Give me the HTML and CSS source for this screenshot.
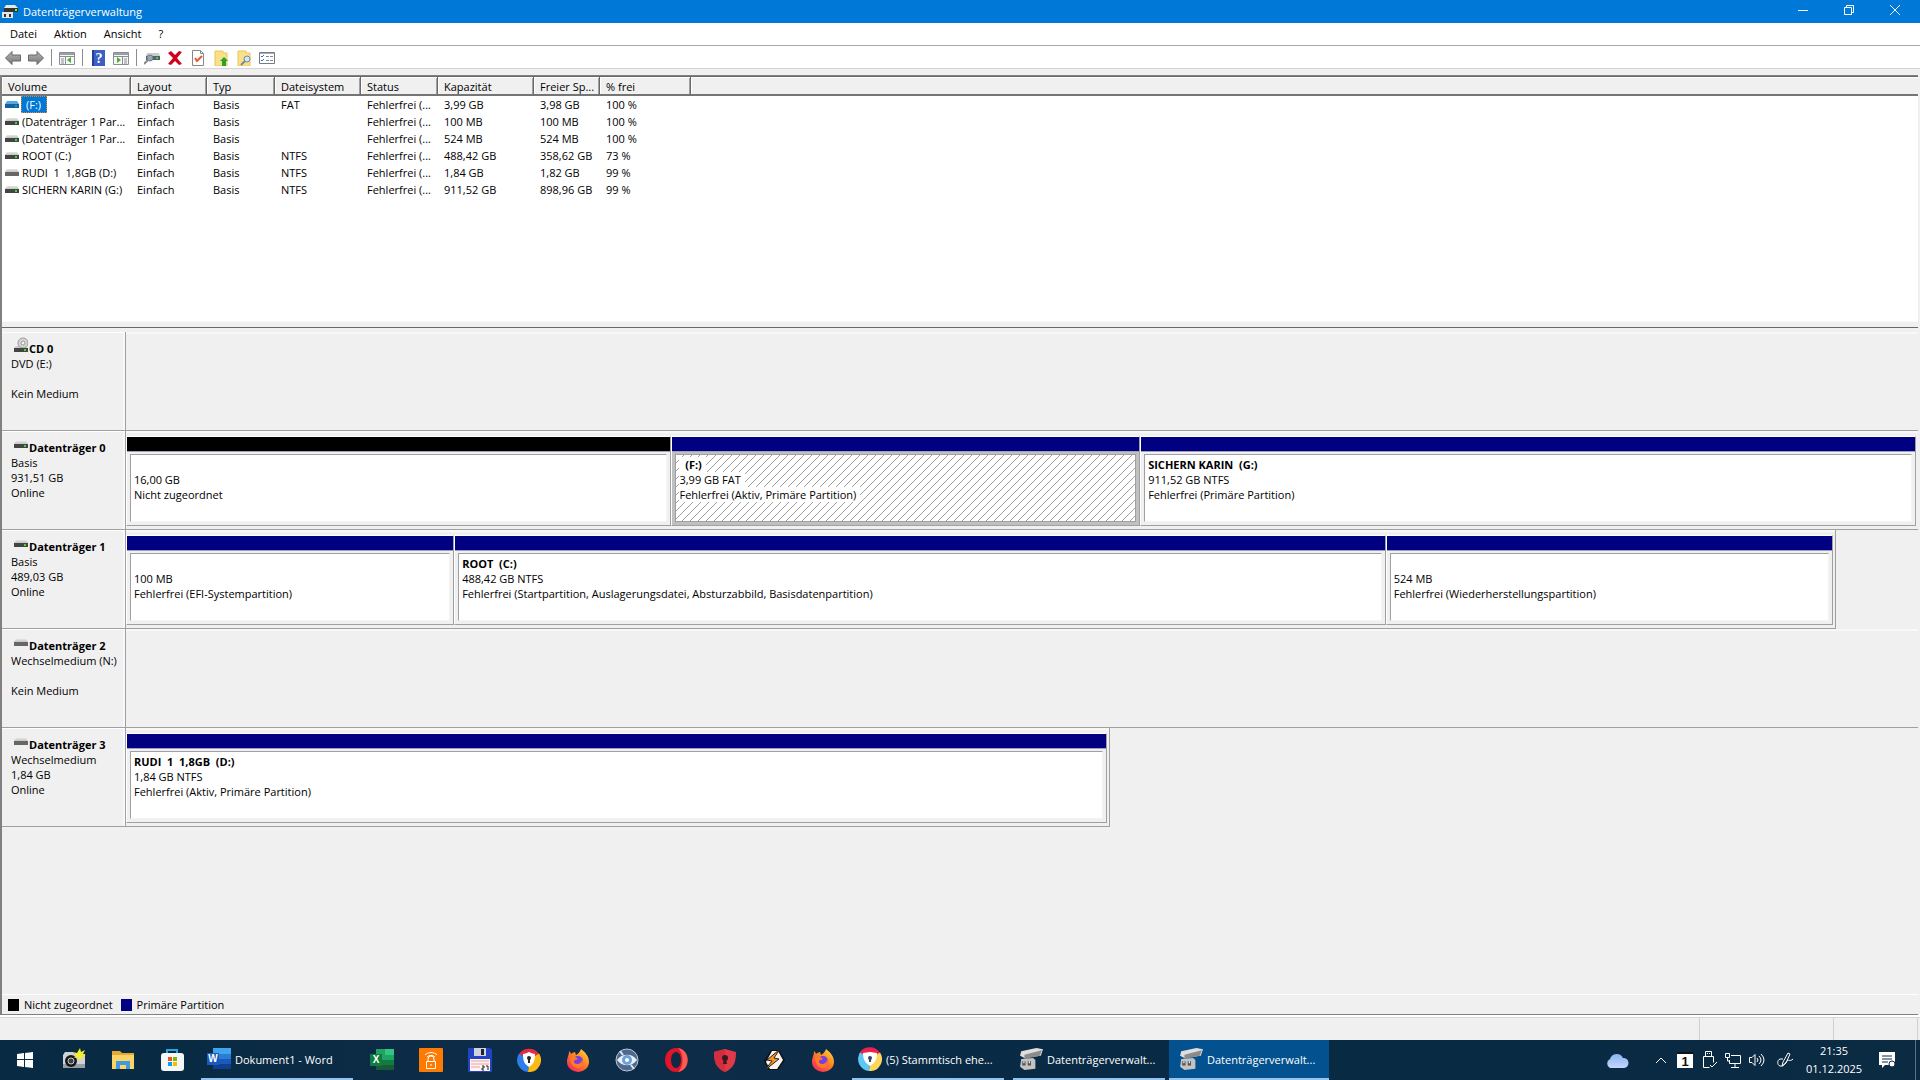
FILE: index.html
```
<!DOCTYPE html>
<html lang="de">
<head>
<meta charset="utf-8">
<title>Datenträgerverwaltung</title>
<link rel="stylesheet" href="styles.css">
</head>
<body>
<svg class="defs" aria-hidden="true">
  <defs>
    <linearGradient id="gTop" x1="0" y1="0" x2="0" y2="1"><stop offset="0" stop-color="#e4e4e4"/><stop offset="1" stop-color="#c4c4c4"/></linearGradient>
    <linearGradient id="gArrow" x1="0" y1="0" x2="0" y2="1"><stop offset="0" stop-color="#b5b5b5"/><stop offset="1" stop-color="#777"/></linearGradient>
    <linearGradient id="gFire" x1="1" y1="0" x2="0.2" y2="1"><stop offset="0" stop-color="#ffe14a"/><stop offset=".45" stop-color="#ff8a1e"/><stop offset="1" stop-color="#f5255e"/></linearGradient>
    <linearGradient id="gCloud" x1="0" y1="0" x2="0" y2="1"><stop offset="0" stop-color="#8ab2f2"/><stop offset="1" stop-color="#c4d6fb"/></linearGradient>
    <symbol id="drive" viewBox="0 0 14 7"><path d="M2 0h10l2 3H0z" fill="url(#gTop)"/><path d="M0 3h14v4H0z" fill="#444"/><path d="M10 4h2v2h-2z" fill="#2fe02f"/></symbol>
    <symbol id="drive-off" viewBox="0 0 14 7"><path d="M2 0h10l2 3H0z" fill="url(#gTop)"/><path d="M0 3h14v4H0z" fill="#666"/></symbol>
    <symbol id="drive-sel" viewBox="0 0 14 7"><path d="M2 0h10l2 3H0z" fill="#5aa6e4"/><path d="M0 3h14v4H0z" fill="#11629f"/><path d="M10 4h2v2h-2z" fill="#1aa0a0"/></symbol>
    <symbol id="cd" viewBox="0 0 14 16"><path d="M2 9h9l3 2H0z" fill="#ccc"/><circle cx="9" cy="6" r="5" fill="#d6d6d6" stroke="#999"/><circle cx="9" cy="6" r="2" fill="#f4f4f4" stroke="#999"/><path d="M0 11h14v4H0z" fill="#444"/><path d="M10 12h2v2h-2z" fill="#2fe02f"/></symbol>
    <symbol id="firefox" viewBox="0 0 24 24"><path d="M15 1c4 3 8 7 8 13a11 10 0 0 1-22 0C1 9 3 8 3 3c1 1 2 2 2 3 1-1 3-2 4-2l1 3c2-1 4-3 5-6z" fill="url(#gFire)"/><circle cx="12" cy="13" r="5" fill="#7b3fe0"/><path d="M4 9c3-1 5 0 7 1 1 1 0 2-2 2-2 1-1 4 2 4s5-2 5-5c2 4 0 9-4 9-5 0-8-5-8-11z" fill="#ff7b28"/></symbol>
    <symbol id="avg" viewBox="0 0 24 24"><path d="M12 12L2 6a12 12 0 0 1 20 0z" fill="#e32b45"/><path d="M12 12l10-6.500A12 12 0 0 1 11 24z" fill="#fbb914"/><path d="M12 12l-1 12A12 12 0 0 1 2 5.500z" fill="#2f7de8"/><path d="M12 4c2 1 5 2 6 2 0 6-1 10-6 13-5-3-6-7-6-13 1 0 4-1 6-2z" fill="#fff"/><circle cx="12" cy="10" r="2" fill="#222"/><path d="M11 10h2v5h-2z" fill="#222"/></symbol>
    <symbol id="avg2" viewBox="0 0 24 24"><path d="M12 12L1 7a12 12 0 0 1 21-1z" fill="#e9234f"/><path d="M12 12l10-6.500A12 12 0 0 1 11 24z" fill="#fbd75a"/><path d="M12 12l-1 12A12 12 0 0 1 2 5.500z" fill="#5cc6f5"/><path d="M12 5c2 0 5 1 7 1 0 6-2 10-7 13-5-3-7-7-7-13 2 0 5-1 7-1z" fill="#fff"/><circle cx="12" cy="11" r="2" fill="#346"/><path d="M11 11h2v4h-2z" fill="#346"/></symbol>
    <symbol id="diskmgmt" viewBox="0 0 22 20"><path d="M2 3L16 0l6 1-2 6-15 2-4-2z" fill="#dedede"/><path d="M5 6l16-4-2 5-14 3z" fill="#8b8b8b"/><path d="M2 10l11-1 2 2v8l-10 1-4-3z" fill="#c3c3c3"/><path d="M3 12h3v4H3zM8 12h3v4H8z" fill="#555"/><path d="M4 12h1v2H4zM9 12h1v2H9z" fill="#fff"/></symbol>
  </defs>
</svg>

<div class="window">
  <header class="titlebar">
    <svg class="app-icon" viewBox="0 0 16 16"><path d="M4 1h9l3 3H2z" fill="#e8e8e8"/><path d="M2 4h14v4H2z" fill="#333"/><path d="M13 5h2v2h-2z" fill="#5f5"/><path d="M0 8h11v6H0z" fill="#e5e5e5"/><path d="M2 10h2v3H2zM7 10h2v3H7z" fill="#333"/></svg>
    <h1>Datenträgerverwaltung</h1>
    <div class="caption">
      <button aria-label="Minimieren"><svg viewBox="0 0 10 10"><path d="M0 5.500h10" stroke="#fff"/></svg></button>
      <button aria-label="Wiederherstellen"><svg viewBox="0 0 10 10"><path d="M.5 2.500h7v7h-7zM2.500 2V.5h7v7H8" fill="none" stroke="#fff"/></svg></button>
      <button aria-label="Schließen"><svg viewBox="0 0 10 10"><path d="M0 0l10 10M10 0L0 10" stroke="#fff"/></svg></button>
    </div>
  </header>

  <nav class="menubar">
    <button>Datei</button><button>Aktion</button><button>Ansicht</button><button>?</button>
  </nav>

  <div class="toolbar">
    <button aria-label="Zurück"><svg viewBox="0 0 16 16"><path d="M.5 8L7 1.500V5h8.500v6H7v3.500z" fill="url(#gArrow)" stroke="#666"/></svg></button>
    <button aria-label="Vorwärts"><svg viewBox="0 0 16 16"><path d="M15.500 8L9 1.500V5H.5v6H9v3.500z" fill="url(#gArrow)" stroke="#666"/></svg></button>
    <i class="sep"></i>
    <button aria-label="Konsolenstruktur"><svg viewBox="0 0 16 16"><path d="M.5 2.500h15v12H.5z" fill="#f7f7f7" stroke="#8a8f96"/><path d="M1 3h14v2H1z" fill="#9aa0a8"/><path d="M1 6.500h14M6.500 7v7" stroke="#8a8f96"/><path d="M2 9h3M2 11h3M2 13h3" stroke="#8a8f96"/><path d="M12 7v6L8 10z" fill="#4cae2c"/></svg></button>
    <i class="sep"></i>
    <button aria-label="Hilfe"><svg viewBox="0 0 16 16"><path d="M2 0h13v16H2z" fill="#3e5fc4"/><path d="M2 0h2v16H2z" fill="#243f94"/><text x="9" y="13" text-anchor="middle" class="help-mark">?</text></svg></button>
    <button aria-label="Aktionsbereich"><svg viewBox="0 0 16 16"><path d="M.5 2.500h15v12H.5z" fill="#f7f7f7" stroke="#8a8f96"/><path d="M1 3h14v2H1z" fill="#9aa0a8"/><path d="M1 6.500h14M9.500 7v7" stroke="#8a8f96"/><path d="M11 9h3M11 11h3M11 13h3" stroke="#8a8f96"/><path d="M4 7v6l4-3z" fill="#4cae2c"/></svg></button>
    <i class="sep"></i>
    <button aria-label="Datenträger prüfen"><svg viewBox="0 0 16 16"><path d="M3 3h12l1 3H2z" fill="#ccc"/><path d="M2 6h14v4H2z" fill="#55606a"/><path d="M12 7h2v2h-2z" fill="#2fe02f"/><circle cx="6" cy="8" r="3" fill="#8fa9b8" stroke="#778"/><path d="M4 10l-4 4" stroke="#888" stroke-width="2"/></svg></button>
    <button aria-label="Löschen"><svg viewBox="0 0 16 16"><path d="M1 3l3-2 4 4 4-4 3 1-5 6 5 6-3 1-4-4-4 4-3-1 5-6z" fill="#d0021b"/></svg></button>
    <button aria-label="Eigenschaften"><svg viewBox="0 0 16 16"><path d="M2.500.5h8l3 3v12h-11z" fill="#fff" stroke="#888"/><path d="M10.500.5v3h3" fill="none" stroke="#888"/><path d="M5 8l2 3 5-5" fill="none" stroke="#e8582a" stroke-width="2"/></svg></button>
    <button aria-label="Ordner aufwärts"><svg viewBox="0 0 16 16"><path d="M2 1h8v2h4v13H2z" fill="#fbe08a" stroke="#e8c65a"/><path d="M11 7l4 4h-2v5h-4v-5H7z" fill="#25a32b"/></svg></button>
    <button aria-label="Suchen"><svg viewBox="0 0 16 16"><path d="M2 1h8v2h4v13H2z" fill="#fbe08a" stroke="#e8c65a"/><circle cx="11" cy="9" r="3" fill="#cfe6f7" stroke="#789"/><path d="M9 11l-4 4" stroke="#789" stroke-width="2"/></svg></button>
    <button aria-label="Liste"><svg viewBox="0 0 16 16"><path d="M.5 2.500h15v11H.5z" fill="#fff" stroke="#777c84"/><path d="M1 3.500h14" stroke="#aab"/><path d="M2 6l1 1 2-2M2 10l1 1 2-2" fill="none" stroke="#2e75c8"/><path d="M7 6.500h3M11 6.500h3M7 10.500h3M11 10.500h3" stroke="#888"/></svg></button>
  </div>

  <main class="panes">
    <section class="volumes">
      <table>
        <colgroup><col class="c-vol"><col class="c-lay"><col class="c-typ"><col class="c-fs"><col class="c-st"><col class="c-cap"><col class="c-free"><col class="c-pct"><col></colgroup>
        <thead><tr><th>Volume</th><th>Layout</th><th>Typ</th><th>Dateisystem</th><th>Status</th><th>Kapazität</th><th>Freier Sp...</th><th>% frei</th><th class="rest"></th></tr></thead>
        <tbody>
          <tr><td><svg class="vol"><use href="#drive-sel"/></svg><span class="sel">(F:)</span></td><td>Einfach</td><td>Basis</td><td>FAT</td><td>Fehlerfrei (...</td><td>3,99 GB</td><td>3,98 GB</td><td>100 %</td><td></td></tr>
          <tr><td><svg class="vol"><use href="#drive"/></svg><span>(Datenträger 1 Par...</span></td><td>Einfach</td><td>Basis</td><td></td><td>Fehlerfrei (...</td><td>100 MB</td><td>100 MB</td><td>100 %</td><td></td></tr>
          <tr><td><svg class="vol"><use href="#drive"/></svg><span>(Datenträger 1 Par...</span></td><td>Einfach</td><td>Basis</td><td></td><td>Fehlerfrei (...</td><td>524 MB</td><td>524 MB</td><td>100 %</td><td></td></tr>
          <tr><td><svg class="vol"><use href="#drive"/></svg><span>ROOT (C:)</span></td><td>Einfach</td><td>Basis</td><td>NTFS</td><td>Fehlerfrei (...</td><td>488,42 GB</td><td>358,62 GB</td><td>73 %</td><td></td></tr>
          <tr><td><svg class="vol"><use href="#drive-off"/></svg><span>RUDI  1  1,8GB (D:)</span></td><td>Einfach</td><td>Basis</td><td>NTFS</td><td>Fehlerfrei (...</td><td>1,84 GB</td><td>1,82 GB</td><td>99 %</td><td></td></tr>
          <tr><td><svg class="vol"><use href="#drive"/></svg><span>SICHERN KARIN (G:)</span></td><td>Einfach</td><td>Basis</td><td>NTFS</td><td>Fehlerfrei (...</td><td>911,52 GB</td><td>898,96 GB</td><td>99 %</td><td></td></tr>
        </tbody>
      </table>
    </section>
    <div class="splitter"></div>

    <section class="disks">
      <article class="disk">
        <div class="label"><h2><svg class="cd"><use href="#cd"/></svg>CD 0</h2><p>DVD (E:)</p><p></p><p>Kein Medium</p></div>
        <div class="track"></div>
      </article>
      <article class="disk">
        <div class="label"><h2><svg class="vol"><use href="#drive"/></svg>Datenträger 0</h2><p>Basis</p><p>931,51 GB</p><p>Online</p></div>
        <div class="track">
          <div class="part free" style="flex-grow:545"><div class="box"><p></p><p>16,00 GB</p><p>Nicht zugeordnet</p></div></div>
          <div class="part chosen" style="flex-grow:468"><div class="box"><h3>  (F:)</h3><p>3,99 GB FAT</p><p>Fehlerfrei (Aktiv, Primäre Partition)</p></div></div>
          <div class="part" style="flex-grow:776"><div class="box"><h3>SICHERN KARIN  (G:)</h3><p>911,52 GB NTFS</p><p>Fehlerfrei (Primäre Partition)</p></div></div>
        </div>
      </article>
      <article class="disk">
        <div class="label"><h2><svg class="vol"><use href="#drive"/></svg>Datenträger 1</h2><p>Basis</p><p>489,03 GB</p><p>Online</p></div>
        <div class="track short" style="width:95.4%">
          <div class="part" style="flex-grow:327"><div class="box"><p></p><p>100 MB</p><p>Fehlerfrei (EFI-Systempartition)</p></div></div>
          <div class="part" style="flex-grow:932"><div class="box"><h3>ROOT  (C:)</h3><p>488,42 GB NTFS</p><p>Fehlerfrei (Startpartition, Auslagerungsdatei, Absturzabbild, Basisdatenpartition)</p></div></div>
          <div class="part" style="flex-grow:446"><div class="box"><p></p><p>524 MB</p><p>Fehlerfrei (Wiederherstellungspartition)</p></div></div>
        </div>
      </article>
      <article class="disk">
        <div class="label"><h2><svg class="vol"><use href="#drive-off"/></svg>Datenträger 2</h2><p>Wechselmedium (N:)</p><p></p><p>Kein Medium</p></div>
        <div class="track"></div>
      </article>
      <article class="disk">
        <div class="label"><h2><svg class="vol"><use href="#drive-off"/></svg>Datenträger 3</h2><p>Wechselmedium</p><p>1,84 GB</p><p>Online</p></div>
        <div class="track short" style="width:54.9%">
          <div class="part" style="flex-grow:1"><div class="box"><h3>RUDI  1  1,8GB  (D:)</h3><p>1,84 GB NTFS</p><p>Fehlerfrei (Aktiv, Primäre Partition)</p></div></div>
        </div>
      </article>
    </section>

    <div class="legend"><i class="sw black"></i><span>Nicht zugeordnet</span><i class="sw navy"></i><span>Primäre Partition</span></div>
  </main>
  <footer class="status"><span></span><span></span></footer>
</div>

<nav class="taskbar">
  <button class="tb" aria-label="Start"><svg class="i16" viewBox="0 0 16 16"><path d="M0 2l7-1v6H0zM8 1l8-1v7H8zM0 8h7v7l-7-1zM8 8h8v8l-8-1z" fill="#fff"/></svg></button>
  <button class="tb" aria-label="Kamera"><svg class="i24" viewBox="0 0 24 24"><path d="M1 7l2-3h8l2 2h10v14H1z" fill="#cfd2d6"/><path d="M1 16h22v4H1z" fill="#9a9da2"/><circle cx="9" cy="13" r="6" fill="#17181a"/><circle cx="9" cy="13" r="3" fill="#3b3f45" stroke="#ccc"/><path d="M18 0l1 4 4-2-2 4 3 1-4 1 2 4-4-2-1 3-1-4-4 1 2-3-3-3 4 1z" fill="#f5ee2a"/></svg></button>
  <button class="tb" aria-label="Explorer"><svg class="i24" viewBox="0 0 24 24"><path d="M1 3h8l2 2h12v16H1z" fill="#e5a934"/><path d="M1 7h22v14H1z" fill="#fbd468"/><path d="M5 13h14v8h-4v-4H9v4H5z" fill="#3f9bdd"/></svg></button>
  <button class="tb" aria-label="Store"><svg class="i24" viewBox="0 0 24 24"><path d="M7 7V2h10v5" fill="none" stroke="#2aa7de" stroke-width="2"/><rect x="1" y="5" width="23" height="18" rx="3" fill="#f4f6f8"/><path d="M8 9h4v4H8z" fill="#f25022"/><path d="M13 9h4v4h-4z" fill="#7fba00"/><path d="M8 14h4v4H8z" fill="#00a4ef"/><path d="M13 14h4v4h-4z" fill="#ffb900"/></svg></button>
  <button class="task run"><svg class="i24" viewBox="0 0 24 24"><path d="M6 1h18v6H6z" fill="#41a5ee"/><path d="M6 7h18v5H6z" fill="#2b7cd3"/><path d="M6 12h18v5H6z" fill="#185abd"/><path d="M6 17h18v5H6z" fill="#103f91"/><path d="M0 6h12v12H0z" fill="#185abd"/><text x="6" y="15" text-anchor="middle" class="letter">W</text></svg>Dokument1 - Word</button>
  <button class="tb" aria-label="Excel"><svg class="i24" viewBox="0 0 24 24"><path d="M6 1h9v11H6z" fill="#21a366"/><path d="M15 1h9v6h-9z" fill="#33c481"/><path d="M15 7h9v5h-9z" fill="#21a366"/><path d="M6 12h9v5H6z" fill="#107c41"/><path d="M6 17h18v5H6z" fill="#185c37"/><path d="M15 12h9v5h-9z" fill="#107c41"/><path d="M0 6h12v12H0z" fill="#107c41"/><text x="6" y="15" text-anchor="middle" class="letter">X</text></svg></button>
  <button class="tb" aria-label="Sicherheit"><svg class="i24" viewBox="0 0 24 24"><rect width="24" height="24" rx="1" fill="#ff7a00"/><path d="M7.500 13.500h9v7h-9zM9 13v-2a3 3 0 0 1 6 0v2M8 9a5 4 0 0 1 8 0M6 7a7 5 0 0 1 12 0M12 16v2" fill="none" stroke="#fff"/></svg></button>
  <button class="tb" aria-label="Commander"><svg class="i24" viewBox="0 0 24 24"><path d="M0 0h22l2 2v22H0z" fill="#2443c4"/><path d="M6 0h12v8H6z" fill="#cfd4dc"/><path d="M13 1h3v6h-3z" fill="#223"/><path d="M2 11h20v12H2z" fill="#fdf4f4"/><path d="M3 13h18M3 16h18M3 19h9" stroke="#ee9d9d"/><path d="M14 18h2v2h-2v2h2M18 18l2 0v4" fill="none" stroke="#222"/></svg></button>
  <button class="tb" aria-label="Secure Browser"><svg class="i24"><use href="#avg"/></svg></button>
  <button class="tb" aria-label="Firefox"><svg class="i24"><use href="#firefox"/></svg></button>
  <button class="tb" aria-label="Auge"><svg class="i24" viewBox="0 0 24 24"><circle cx="12" cy="12" r="11" fill="#50688a" stroke="#b6c6dc"/><path d="M2 12c5-7 15-7 20 0-5 7-15 7-20 0z" fill="#e8f0fa"/><circle cx="12" cy="12" r="5" fill="#6aa0dc"/><circle cx="12" cy="12" r="2" fill="#fff"/><path d="M5 3l3 4M19 21l-3-4" stroke="#dde7f4" stroke-width="2"/></svg></button>
  <button class="tb" aria-label="Opera"><svg class="i24" viewBox="0 0 24 24"><ellipse cx="12" cy="12" rx="11" ry="12" fill="#e0142a"/><path d="M14 0c13 2 13 22 0 24 6-5 6-19 0-24z" fill="#ff5a52"/><ellipse cx="12" cy="12" rx="5" ry="8" fill="#0d2b42"/></svg></button>
  <button class="tb" aria-label="Schutz"><svg class="i24" viewBox="0 0 24 24"><path d="M12 1l11 3c0 10-2 16-11 20C3 20 1 14 1 4z" fill="#e03a48"/><path d="M12 1v23C3 20 1 14 1 4z" fill="#d42e3e"/><circle cx="12" cy="10" r="3" fill="#3a1820"/><path d="M11 11h2l1 5h-4z" fill="#3a1820"/></svg></button>
  <button class="tb" aria-label="Winamp"><svg class="i24" viewBox="0 0 24 24"><path d="M9 2h8l6 10-7 10H7L2 13z" fill="#111"/><path d="M10 3h6l5 9-6 9H8l-4-7z" fill="#f4f4f4"/><path d="M18 1L5 12l5 1-7 9 14-11-5-1z" fill="#f7941d" stroke="#222" stroke-width="1"/></svg></button>
  <button class="tb" aria-label="Firefox"><svg class="i24"><use href="#firefox"/></svg></button>
  <button class="task run"><svg class="i24"><use href="#avg2"/></svg>(5) Stammtisch ehe...</button>
  <button class="task run"><svg class="i24"><use href="#diskmgmt"/></svg>Datenträgerverwalt...</button>
  <button class="task active"><svg class="i24"><use href="#diskmgmt"/></svg>Datenträgerverwalt...</button>

  <div class="tray">
    <button aria-label="Wetter"><svg width="24" height="16" viewBox="0 0 24 16"><path d="M5 16a5 5 0 0 1 0-9 7 7 0 0 1 13-1 5 5 0 0 1 1 10z" fill="url(#gCloud)"/></svg></button>
    <button class="chev" aria-label="Ausgeblendete Symbole"><svg width="12" height="8" viewBox="0 0 12 8"><path d="M1 7l5-5 5 5" fill="none" stroke="#fff"/></svg></button>
    <button aria-label="Kalender"><svg width="16" height="16" viewBox="0 0 16 16"><path d="M0 0h16v16H0z" fill="#fff"/><path d="M0 0h16v2H0z" fill="#111"/><text x="8" y="14" text-anchor="middle" class="day">1</text></svg></button>
    <button aria-label="USB"><svg width="16" height="18" viewBox="0 0 16 18"><path d="M4.500 5V.5h6V5M2.500 5.500h10v6M2.500 5.500v11h6M6 2.500h1M8 2.500h1M9 14l2 2 5-5" fill="none" stroke="#fff"/></svg></button>
    <button aria-label="Netzwerk"><svg width="16" height="16" viewBox="0 0 16 16"><path d="M6 3.500h9.500v8h-11V8M10 12v3M6 15.500h8M.5 1.500h4v4h-4zM2.500 6v3H4" fill="none" stroke="#fff"/></svg></button>
    <button aria-label="Lautstärke"><svg width="16" height="16" viewBox="0 0 16 16"><path d="M.5 5.500H3l3-3v11l-3-3H.5zM8 6q2 2 0 4M10 4q4 4 0 8M12 2q6 6 0 12" fill="none" stroke="#fff"/></svg></button>
    <button class="pen" aria-label="Stift"><svg width="16" height="16" viewBox="0 0 16 16"><path d="M5 14l1-4 5-9 2 1-4 9-4 3zM6 7H3c-3 1-3 6 0 7 4 1 5-3 7-5 2-2 3 1 6-2" fill="none" stroke="#fff"/></svg></button>
    <time class="clock"><span>21:35</span><span>01.12.2025</span></time>
    <button class="note" aria-label="Benachrichtigungen"><svg width="16" height="16" viewBox="0 0 16 16"><path d="M0 0h16v13H6l-3 3v-3H0z" fill="#fff"/><path d="M3 4h10M3 7h10M3 10h6" stroke="#0a2a42"/><circle cx="13" cy="12" r="3" fill="#fff" stroke="#0a2a42"/></svg></button>
  </div>
</nav>
</body>
</html>
```
FILE: styles.css
```
* { box-sizing: border-box; margin: 0; padding: 0; }

body {
  display: flex;
  flex-direction: column;
  min-height: 100vh;
  background: #f0f0f0;
  color: #000;
  font: 11px/15px "Segoe UI", "Open Sans", "Noto Sans", sans-serif;
}

button { border: 0; background: none; color: inherit; font: inherit; }
svg { display: block; flex: none; }
h1, h2, h3 { font-size: inherit; }
.defs { position: absolute; width: 0; height: 0; }

.window { flex: 1; display: flex; flex-direction: column; }

/* title bar and menu */
.titlebar { display: flex; align-items: center; height: 23px; padding: 0 2px; gap: 5px; background: #0078d7; color: #fff; }
.titlebar h1 { font-weight: 400; flex: 1; }
.app-icon { width: 16px; height: 16px; }
.caption { display: flex; align-self: flex-start; }
.caption button { display: grid; place-items: center; width: 46px; height: 20px; }
.caption svg { width: 10px; height: 10px; }

.menubar { display: flex; height: 23px; padding: 0 2px 1px; background: #fff; border-bottom: 1px solid #a8a8a8; }
.menubar button { padding: 0 9px 0 8px; }

.toolbar { display: flex; align-items: center; gap: 7px; height: 23px; padding: 1px 0 0 5px; background: #fff; border-bottom: 1px solid #d4d4d4; }
.toolbar svg { width: 16px; height: 16px; }
.sep { width: 1px; height: 17px; background: #8c8c8c; }
.help-mark { fill: #fff; font: bold 14px "Liberation Serif", serif; }

/* volume list */
.panes { flex: 1; display: flex; flex-direction: column; margin: 6px 2px 0 0; border: solid #808080; border-width: 1px 0 1px 2px; }
.volumes { height: 245px; background: #fff; border-top: 1px solid #696969; }
table { width: 100%; table-layout: fixed; border-collapse: separate; border-spacing: 0; }
th { height: 19px; padding: 1px 0 0 6px; background: #f0f0f0; border-right: 1px solid #696969; border-bottom: 2px solid #757575; box-shadow: inset 1px 1px #fff, inset -1px 0 #a0a0a0; font-weight: 400; text-align: left; }
th.rest { border-right: 0; box-shadow: inset 1px 1px #fff; }
td { height: 17px; padding-left: 6px; line-height: 17px; white-space: pre; overflow: hidden; }
td:first-child { display: flex; align-items: center; gap: 3px; padding-left: 3px; }
.c-vol { width: 129px; } .c-lay { width: 76px; } .c-typ { width: 68px; } .c-fs { width: 86px; }
.c-st { width: 77px; } .c-cap { width: 96px; } .c-free { width: 66px; } .c-pct { width: 91px; }
.vol { width: 14px; height: 7px; }
.cd { width: 14px; height: 16px; }
.sel { margin-left: -1px; padding: 0 6px 0 5px; background: #0078d7; color: #fff; outline: 1px dotted #e08728; outline-offset: -1px; }

.splitter { height: 11px; border-top: 1px solid #f8f8f8; background: linear-gradient(#f0f0f0 5px, #696969 5px 6px, #f0f0f0 6px); }

/* graphical view */
.disks { flex: 1; }
.disk { display: grid; grid-template-columns: 124px 1fr; height: 99px; }
.label { padding: 9px 8px 0 9px; border: solid #a0a0a0; border-width: 0 1px 1px 0; box-shadow: inset 0 1px #fff, inset -2px 0 #f8f8f8; }
.label p, .box p { min-height: 15px; white-space: pre; overflow: hidden; }
.label h2 { display: flex; gap: 1px; height: 15px; padding-left: 3px; white-space: nowrap; }
.label h2 .vol { margin-top: 1px; }
.label h2 .cd { margin-top: -4px; }
.track { display: flex; padding: 5px 2px 3px 0; border-bottom: 1px solid #a0a0a0; box-shadow: inset 0 2px #f8f8f8; }
.short { border-right: 1px solid #a0a0a0; }
.part { flex: 1 1 0; min-width: 0; display: flex; flex-direction: column; border: 1px solid; border-color: #fff #a0a0a0 #a0a0a0 #fff; }
.part::before { content: ""; height: 14px; background: #000080; border-bottom: 1px solid #a0a0c0; }
.free::before { background: #000; }
.box { flex: 1; margin: 2px 3px 3px; padding: 2px 3px; background: #fff; border: 1px solid; border-color: #a0a0a0 #f4f4f4 #f4f4f4 #a0a0a0; }
.box h3 { white-space: pre; }
.chosen { background: #c0c0c0; }
.chosen .box { border-color: #a0a0a0; background: url("data:image/svg+xml,%3Csvg xmlns='http://www.w3.org/2000/svg' width='8' height='8'%3E%3Cpath d='M-1 9L9-1M-1 1L1-1M7 9L9 7' stroke='%23a0a0a0'/%3E%3C/svg%3E") #fff; }
.chosen h3, .chosen p { width: fit-content; padding-right: 4px; background: #fff; }

.legend { display: flex; align-items: center; height: 20px; padding-left: 6px; border-top: 1px solid #fff; }
.sw { width: 11px; height: 12px; margin-right: 5px; }
.legend span { margin-right: 8px; }
.black { background: #000; }
.navy { background: #000080; }

.status { display: flex; justify-content: flex-end; height: 25px; padding: 3px 2px 0 0; box-shadow: inset 0 2px #fff, inset 0 3px #d7d7d7; }
.status span { width: 134px; border-left: 1px solid #d0d0d0; }
.status span:last-child { width: 85px; border-right: 1px solid #d0d0d0; }

/* taskbar */
.taskbar { display: flex; height: 40px; background: linear-gradient(90deg, #082a42, #0d2c48 30%, #082a44 60%, #0a2b42); color: #fff; }
.i16 { width: 16px; height: 16px; }
.i24 { width: 24px; height: 24px; }
.tb { display: grid; place-items: center; width: 49px; }
.task { display: flex; align-items: center; gap: 4px; width: 152px; padding-left: 6px; margin: 0 4px 0 5px; white-space: nowrap; border-bottom: 2px solid #94c3ee; }
.active { width: 160px; padding-left: 10px; margin: 0; background: #03518f; }

.tray { display: flex; align-items: center; gap: 8px; margin: 0 4px 0 auto; border-right: 1px solid #5c7384; }
.tray .chev { margin: 0 2px 0 18px; }
.tray .pen { margin-left: 4px; }
.clock { display: flex; flex-direction: column; align-items: center; width: 66px; line-height: 18px; }
.note { margin: 0 20px 0 4px; }
.day { fill: #111; font: bold 13px "Liberation Sans", sans-serif; }
.letter { fill: #fff; font: bold 10px "Liberation Sans", sans-serif; }
```
